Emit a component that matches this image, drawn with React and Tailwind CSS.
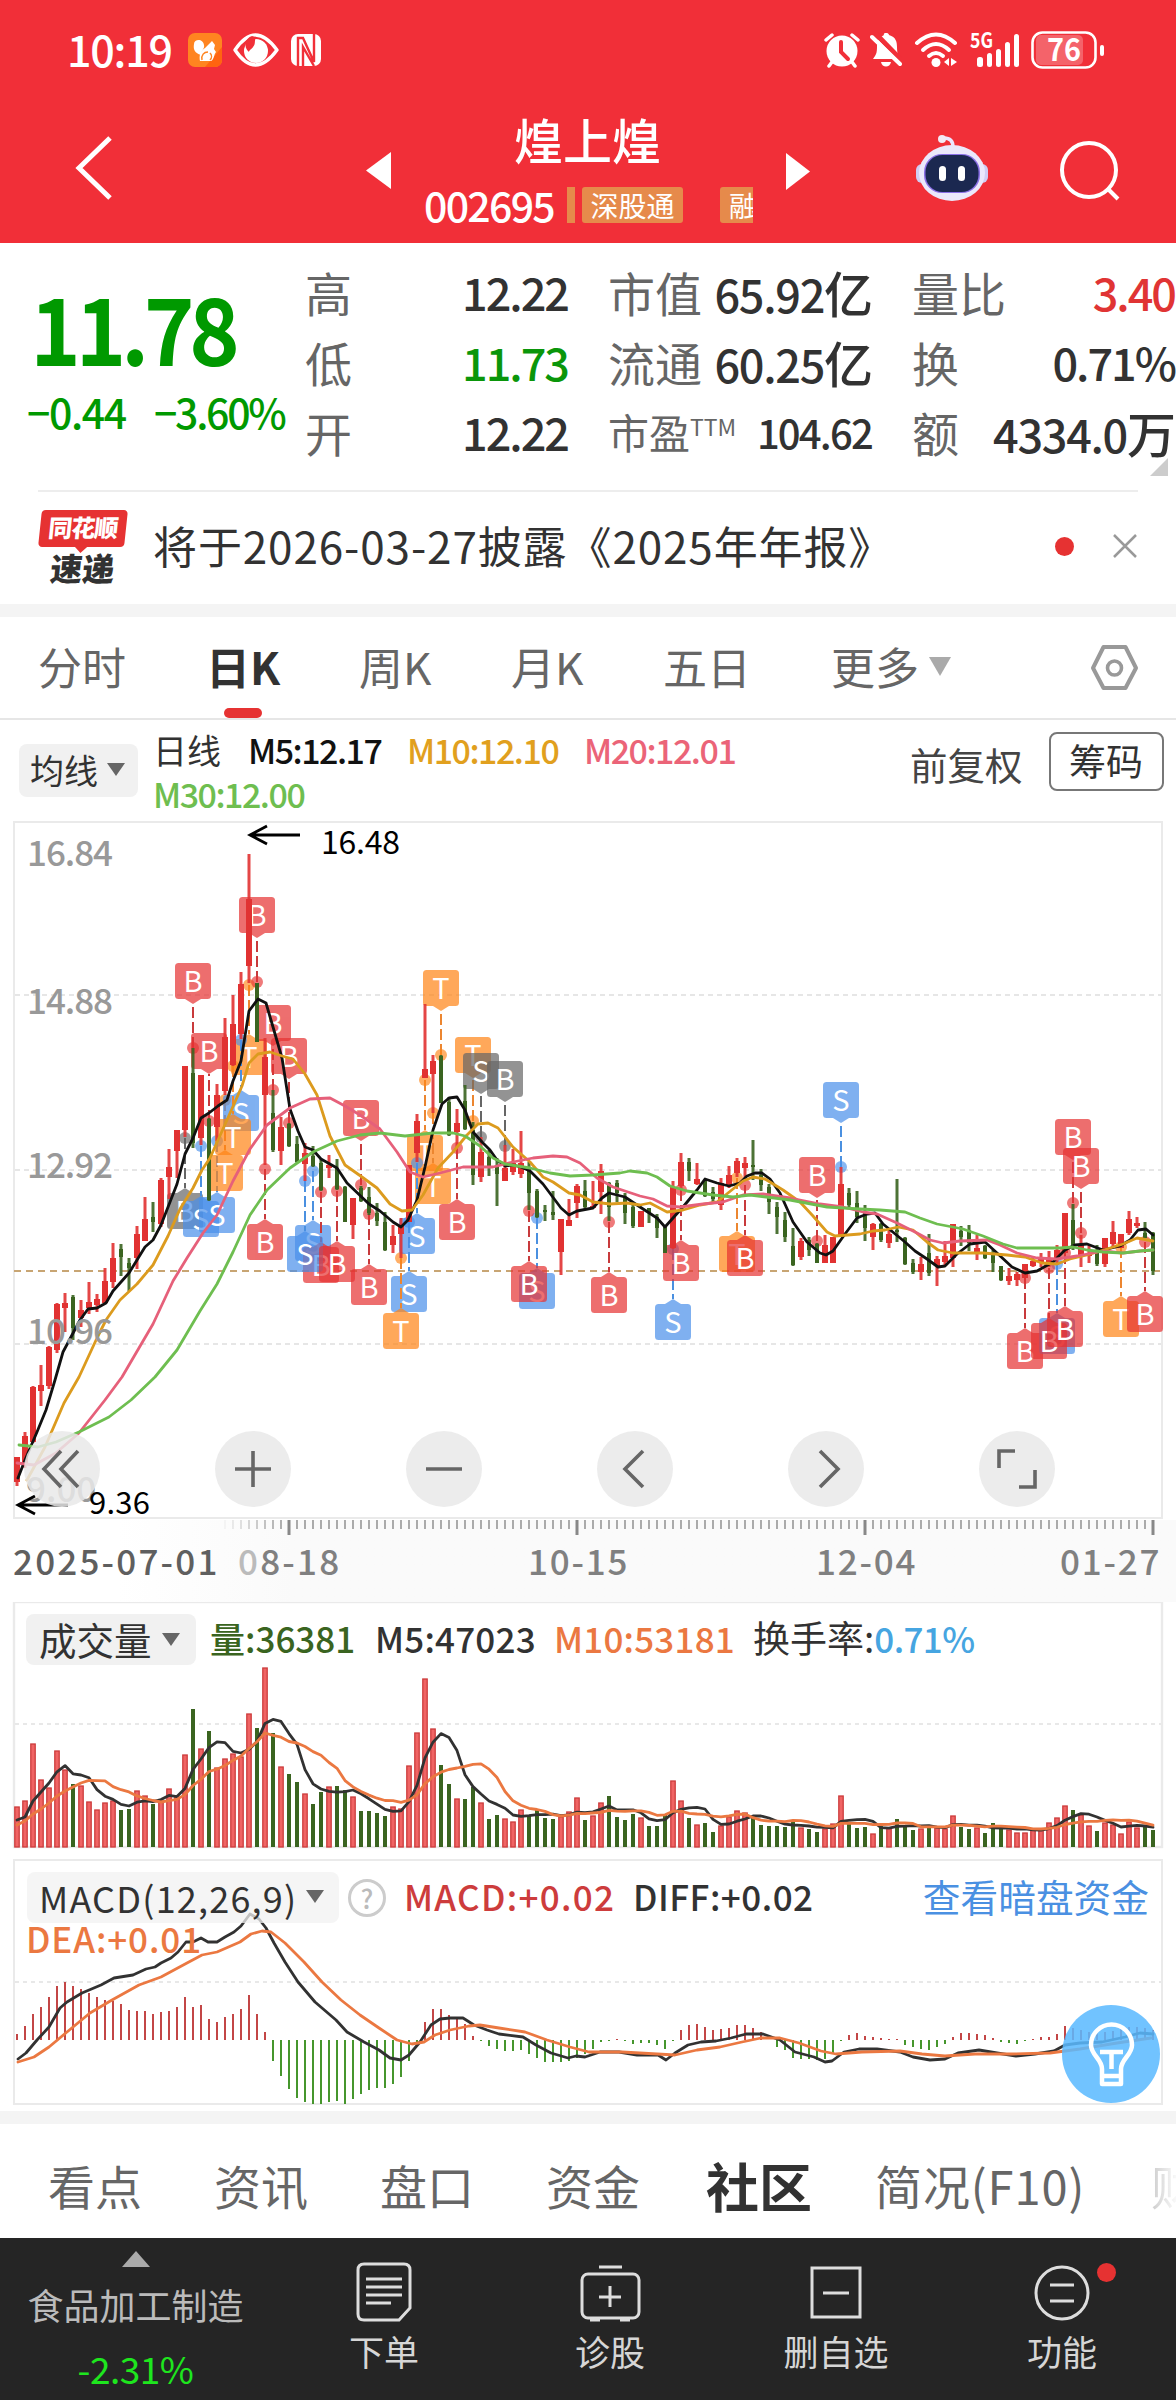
import React from 'react';

// [high, bodyTop, bodyBottom, low, down?] in chart pixels, one entry per trading day
const CANDLES = [
  [637, 637, 662, 666], [612, 616, 645, 648], [566, 567, 622, 623], [545, 565, 571, 586], [526, 527, 566, 569],
  [483, 484, 530, 533], [473, 483, 488, 512], [475, 477, 508, 520, 1], [480, 490, 498, 507], [462, 482, 488, 494],
  [474, 479, 485, 492], [448, 461, 483, 484], [423, 438, 462, 468], [424, 429, 437, 456, 1], [438, 443, 448, 471, 1],
  [406, 414, 438, 449], [377, 399, 421, 421], [382, 397, 402, 412, 1], [358, 360, 404, 407], [329, 347, 357, 379],
  [310, 310, 331, 358], [246, 246, 310, 317], [228, 253, 323, 328, 1], [255, 255, 318, 325], [298, 299, 380, 381, 1],
  [264, 275, 307, 321], [198, 217, 271, 275], [175, 204, 245, 246], [152, 164, 214, 219], [34, 79, 146, 163],
  [163, 163, 222, 222, 1], [218, 237, 275, 345], [270, 293, 330, 332, 1], [297, 307, 331, 345], [303, 304, 326, 327, 1],
  [316, 324, 342, 343, 1], [323, 333, 344, 361], [326, 336, 346, 347, 1], [339, 343, 370, 371, 1], [335, 345, 348, 358],
  [339, 348, 369, 370, 1], [366, 367, 402, 402, 1], [378, 378, 405, 419], [366, 368, 381, 382, 1], [367, 377, 393, 395, 1],
  [383, 393, 401, 406, 1], [392, 402, 430, 431, 1], [405, 416, 425, 433], [398, 406, 414, 438], [345, 345, 402, 402],
  [294, 301, 333, 342], [184, 249, 258, 258], [235, 241, 254, 293], [235, 236, 283, 283, 1], [277, 282, 315, 316, 1],
  [289, 303, 312, 327], [265, 281, 309, 310, 1], [302, 310, 355, 365, 1], [317, 332, 357, 362], [330, 337, 347, 356, 1],
  [338, 345, 354, 386, 1], [325, 348, 361, 361], [329, 343, 352, 355], [311, 343, 354, 358], [342, 347, 373, 390, 1],
  [369, 371, 397, 398, 1], [385, 390, 392, 401, 1], [371, 392, 395, 400, 1], [399, 399, 432, 455], [379, 400, 406, 406],
  [364, 366, 383, 398], [360, 371, 387, 389, 1], [361, 386, 388, 388], [344, 351, 372, 394], [362, 363, 387, 401, 1],
  [360, 363, 373, 382, 1], [373, 377, 393, 404, 1], [382, 387, 406, 408, 1], [391, 391, 407, 407], [388, 388, 393, 403, 1],
  [394, 397, 408, 418, 1], [407, 407, 433, 433, 1], [361, 367, 428, 429], [333, 342, 366, 369], [338, 342, 351, 361, 1],
  [343, 359, 364, 365], [360, 361, 376, 377, 1], [367, 372, 379, 382, 1], [358, 363, 385, 390], [346, 355, 365, 368],
  [338, 341, 353, 357], [337, 343, 348, 361], [320, 345, 347, 360, 1], [349, 355, 365, 371, 1], [364, 367, 382, 394, 1],
  [382, 387, 397, 414, 1], [392, 400, 417, 422, 1], [408, 426, 445, 446, 1], [418, 421, 437, 440], [417, 420, 430, 436, 1],
  [423, 424, 443, 443, 1], [415, 425, 443, 443], [417, 417, 443, 443], [347, 364, 416, 417], [368, 373, 385, 387, 1],
  [371, 383, 397, 403, 1], [385, 392, 408, 421, 1], [403, 404, 417, 430], [403, 404, 420, 422, 1], [408, 414, 423, 428],
  [359, 410, 412, 422, 1], [417, 418, 444, 445, 1], [439, 443, 452, 454, 1], [437, 444, 452, 460], [414, 433, 453, 456, 1],
  [436, 439, 446, 466], [421, 436, 442, 445], [404, 404, 438, 447], [406, 411, 417, 426, 1], [405, 410, 423, 431, 1],
  [415, 428, 434, 440], [425, 426, 438, 439, 1], [430, 435, 443, 452, 1], [446, 446, 460, 461, 1], [448, 456, 461, 465],
  [452, 454, 460, 466], [444, 444, 458, 458], [436, 441, 446, 447], [433, 438, 443, 447], [431, 438, 445, 447],
  [425, 430, 438, 445], [393, 393, 433, 433], [384, 400, 427, 430, 1], [415, 425, 437, 447], [425, 433, 436, 443],
  [425, 430, 444, 446, 1], [418, 418, 444, 447], [401, 412, 424, 427], [414, 414, 428, 428], [391, 399, 413, 415],
  [397, 403, 406, 408], [402, 413, 418, 418, 1], [412, 413, 451, 455, 1],
];

const MA5 = '18,658 25,640 37,612 46,590 55,560 63,532 80,500 88,489 97,488 106,483 113,471 129,453 145,427 153,420 161,405 170,382 177,364 185,334 193,318 201,298 209,293 218,286 227,280 233,261 241,241 249,191 258,179 266,183 273,207 282,238 290,289 298,311 305,327 313,330 321,339 337,348 347,363 369,384 380,391 393,402 401,407 408,400 417,380 425,347 433,310 442,284 449,278 457,277 465,290 473,312 482,322 490,330 497,340 505,346 513,345 521,347 530,351 543,364 561,388 569,395 577,391 593,388 602,378 609,373 625,377 640,387 657,398 665,407 673,398 683,387 697,370 705,359 717,363 729,366 740,363 747,356 755,353 762,353 770,359 780,373 793,402 807,422 820,433 826,435 833,431 845,414 857,398 867,394 875,393 883,404 905,422 915,431 927,439 938,447 945,446 957,434 970,424 985,422 997,433 1012,447 1025,453 1037,451 1053,442 1065,430 1075,425 1087,424 1103,430 1120,426 1130,420 1138,410 1146,409 1153,415';
const MA10 = '27,660 45,627 64,583 79,557 97,518 106,500 120,480 137,464 153,445 168,416 180,389 193,368 202,350 210,338 227,300 242,266 249,243 258,234 270,232 282,236 293,239 305,254 317,275 330,316 345,345 362,357 377,368 390,384 402,391 412,390 423,375 438,348 453,332 467,315 478,304 488,303 498,308 513,327 530,342 543,357 553,362 569,373 580,375 593,382 610,384 627,383 640,385 650,383 667,392 683,390 700,385 717,382 728,373 743,361 753,357 765,359 783,370 800,382 813,396 827,412 835,416 860,414 873,411 885,410 898,407 913,410 927,422 938,430 953,433 983,433 1007,435 1025,437 1042,443 1057,444 1070,439 1087,435 1107,429 1123,424 1137,418 1153,421';
const MA20 = '17,643 34,645 56,633 79,613 105,580 122,557 153,504 173,461 187,438 203,413 217,395 233,361 250,329 267,305 290,288 310,279 330,278 345,286 360,295 380,309 397,332 410,352 423,357 440,353 463,347 493,347 513,342 533,338 553,336 567,337 580,343 597,358 613,367 640,376 653,379 667,386 680,387 703,384 723,382 743,375 763,374 790,378 820,384 843,387 863,392 877,394 897,403 917,413 930,420 943,423 960,421 987,420 1000,425 1017,433 1037,438 1057,439 1077,436 1103,431 1123,433 1140,431 1153,430';
const MA30 = '19,625 38,627 56,622 79,612 109,597 131,580 155,557 177,530 200,491 217,464 233,432 250,395 267,370 290,348 313,332 337,321 360,315 380,313 405,316 433,313 453,313 465,316 480,326 493,338 505,344 530,348 550,353 570,356 593,355 620,353 630,351 647,353 657,357 670,366 687,371 713,375 733,377 750,375 790,380 827,387 860,389 880,390 905,392 920,398 937,404 963,409 983,416 1003,424 1017,428 1037,428 1060,428 1073,427 1087,430 1103,432 1123,433 1140,431 1153,430';

const DIFF = '18,209 26,203 37,190 49,177 60,158 67,152 82,143 101,135 114,128 133,125 146,119 155,117 161,113 171,108 178,102 186,92 193,92 201,88 208,92 217,92 225,87 234,82 241,76 250,64 259,69 266,78 274,93 285,112 298,132 315,152 336,170 347,182 364,192 379,200 390,208 401,210 409,205 420,192 431,175 440,169 450,168 463,168 474,175 487,180 499,184 523,187 536,195 551,203 568,208 576,206 585,207 600,202 619,202 637,205 658,205 666,210 675,203 688,195 701,192 716,191 731,188 746,184 763,184 780,190 795,202 814,207 825,212 832,211 844,202 859,199 877,199 900,202 913,207 930,210 945,209 958,203 979,200 997,203 1016,206 1035,204 1054,201 1065,195 1080,193 1102,192 1125,187 1140,183 1153,184';
const DEA = '18,212 34,207 49,197 67,182 90,163 112,150 139,135 161,127 187,113 202,105 217,102 240,92 251,84 262,81 271,82 285,93 304,112 322,132 341,150 360,165 379,178 397,190 412,194 424,192 435,185 450,180 469,176 480,175 499,178 525,182 547,190 570,197 589,202 622,202 675,205 697,200 720,197 742,192 761,188 780,188 799,193 821,201 836,204 862,202 900,201 922,204 945,206 975,204 1012,204 1050,203 1080,199 1117,193 1151,188';

const VOLUMES = [41, 47, 104, 68, 60, 97, 78, 63, 62, 46, 38, 45, 47, 37, 38, 57, 52, 43, 47, 59, 51, 93, 138, 99, 116, 80, 89, 94, 91, 134, 119, 180, 114, 81, 73, 65, 54, 43, 55, 61, 61, 57, 51, 36, 36, 34, 31, 41, 39, 82, 115, 169, 119, 82, 63, 49, 48, 60, 45, 28, 32, 29, 26, 38, 32, 37, 29, 28, 31, 36, 50, 27, 32, 45, 51, 30, 27, 33, 30, 21, 21, 32, 67, 47, 29, 23, 24, 15, 22, 31, 37, 35, 30, 22, 21, 21, 20, 26, 20, 18, 15, 19, 24, 52, 23, 19, 20, 14, 21, 20, 28, 21, 17, 19, 22, 20, 19, 32, 20, 18, 20, 14, 24, 19, 18, 15, 15, 19, 18, 25, 30, 42, 37, 33, 22, 16, 25, 23, 14, 26, 20, 22, 17];

const MACD = [6, 14, 26, 33, 43, 54, 58, 54, 51, 47, 43, 40, 39, 36, 30, 29, 29, 26, 28, 29, 33, 43, 33, 35, 21, 18, 23, 26, 31, 45, 26, 8, -21, -36, -49, -58, -62, -64, -64, -62, -61, -64, -59, -54, -50, -48, -48, -44, -37, -21, -6, 18, 31, 31, 25, 21, 16, 4, -1, -6, -9, -11, -11, -10, -14, -18, -22, -22, -22, -21, -18, -14, -9, -2, -1, 1, -1, -4, -3, -3, -5, -9, -1, 10, 15, 16, 13, 10, 11, 12, 15, 15, 12, 8, 0, -7, -10, -18, -19, -19, -20, -19, -14, -1, 5, 7, 4, 3, 2, 1, 1, -5, -7, -9, -10, -7, -4, 3, 7, 7, 6, 5, 2, -2, -3, -4, -1, 1, 3, 3, 6, 14, 12, 10, 8, 7, 8, 9, 11, 13, 13, 12, 10];

// [letter, tone, day index, box top, dot y]
const SIGNALS = [
  ['B', 'gray', 21, 373, 318], ['B', 'red', 22, 143, 228], ['S', 'blue', 23, 381, 326], ['B', 'red', 24, 213, 301],
  ['S', 'blue', 25, 377, 321], ['T', 'orange', 26, 335, 280], ['T', 'orange', 29, 219, 165], ['S', 'blue', 28, 275, 220],
  ['T', 'orange', 27, 299, 246], ['B', 'red', 30, 77, 162], ['B', 'red', 31, 404, 349], ['B', 'red', 32, 185, 270],
  ['B', 'red', 34, 218, 303], ['S', 'blue', 37, 405, 351], ['B', 'red', 38, 427, 372], ['S', 'blue', 36, 416, 361],
  ['B', 'red', 40, 426, 371], ['B', 'red', 43, 280, 365], ['B', 'red', 44, 449, 394], ['S', 'blue', 49, 456, 402],
  ['T', 'orange', 48, 493, 438], ['T', 'orange', 51, 315, 260], ['T', 'orange', 52, 348, 293], ['S', 'blue', 50, 398, 343],
  ['T', 'orange', 53, 150, 235], ['B', 'red', 55, 384, 328], ['T', 'orange', 57, 217, 301], ['S', 'gray', 58, 233, 317],
  ['B', 'gray', 61, 241, 326], ['S', 'blue', 65, 453, 398], ['B', 'red', 64, 446, 391], ['B', 'red', 74, 457, 402],
  ['S', 'blue', 82, 484, 429], ['B', 'red', 83, 425, 370], ['T', 'orange', 90, 416, 358], ['B', 'red', 91, 420, 365],
  ['B', 'red', 100, 337, 421], ['S', 'blue', 103, 262, 347], ['B', 'red', 126, 513, 458], ['S', 'blue', 130, 498, 444],
  ['B', 'red', 129, 503, 448], ['B', 'red', 131, 491, 433], ['B', 'red', 132, 299, 383], ['B', 'red', 133, 328, 413],
  ['T', 'orange', 138, 481, 427], ['B', 'red', 141, 476, 422],
];

const TONES = {
  red: ['#e63232', '#c83a3c'],
  blue: ['#4a90eb', '#4a90e0'],
  orange: ['#ff8415', '#ec8630'],
  gray: ['#666666', '#666666'],
};

const dayX = (i) => 17 + i * 8;

// moving average as a list of points, the first days use the values in seed
function averagePoints(days, seed, base) {
  return VOLUMES.map((_, i) => {
    const value = i < seed.length
      ? seed[i]
      : VOLUMES.slice(i - days + 1, i + 1).reduce((a, b) => a + b, 0) / days;
    return `${dayX(i)},${(base - value).toFixed(1)}`;
  }).join(' ');
}

function Line({ points, color, width = 2.8 }) {
  return <polyline points={points} fill="none" stroke={color} strokeWidth={width} strokeLinejoin="round" strokeLinecap="round" />;
}

function Signal({ letter, tone, x, top, dot }) {
  const [fill, stem] = TONES[tone];
  const above = top < dot;
  const edge = above ? top + 36 : top;
  const tip = above ? edge + 5 : edge - 5;
  return (
    <g>
      <line x1={x} x2={x} y1={dot} y2={tip} stroke={stem} strokeWidth="2" strokeDasharray="11 4" />
      <circle cx={x} cy={dot} r="6" fill={fill} opacity="0.65" />
      <g fill={fill} opacity="0.7">
        <rect x={x - 18} y={top} width="36" height="36" rx="3.5" />
        <path d={`M${x - 8} ${edge}L${x} ${tip}L${x + 8} ${edge}z`} />
      </g>
      <text x={x} y={top + 28.5} textAnchor="middle" fontSize="29" fill="#fff">{letter}</text>
    </g>
  );
}

function StatusBar() {
  return (
    <div className="flex h-[100px] items-center justify-between pl-[67px] pr-[71px] text-white">
      <div className="flex items-center">
        <span className="relative -top-[2px] w-[107px] whitespace-nowrap text-[43px] font-medium tracking-[-1.200px]">10:19</span>
        <svg width="34" height="34" viewBox="0 0 34 34" className="ml-[14px]">
          <rect width="34" height="34" rx="7" fill="#ff8420" />
          <path d="M17 34h10a7 7 0 0 0 7-7V14z" fill="#ff6410" />
          <path d="M6 11c0-5 9-6 10 1 1 4-3 5-3 10-6-2-8-5-7-11z" fill="#fff" />
          <path d="M17 15l7-7 3 4-1 4 2 3c-2 2-2 8-5 9H12c-1-5 0-10 5-13z" fill="#fff" />
          <path d="M14 27c-1-5 2-8 6-8M22 27c2-2 2-5 0-7" fill="none" stroke="#ff8420" strokeWidth="1.500" />
        </svg>
        <svg width="46" height="34" viewBox="0 0 46 34" className="ml-[11px]">
          <path d="M2 17Q22 -13 44 17Q22 47 2 17z" fill="none" stroke="#fff" strokeWidth="3.4" strokeLinejoin="round" />
          <circle cx="23" cy="18" r="12" fill="#fff" />
          <path d="M23 4c-2 4 0 7-3 10-1 2-4 3-4 5-6-5-4-14 3-16z" fill="#f12f38" />
        </svg>
        <svg width="32" height="34" viewBox="0 0 32 34" className="ml-[11px]">
          <rect x="1" y="1" width="30" height="32" rx="7" fill="#fff" />
          <path d="M8 33V5l5 0 11 24V1M13 33V14l11 19" fill="none" stroke="#f12f38" strokeWidth="2.4" />
        </svg>
      </div>
      <div className="flex items-center">
        <svg width="36" height="36" viewBox="0 0 36 36">
          <circle cx="18" cy="19" r="15.500" fill="#fff" />
          <path d="M17 10v10l7 7" fill="none" stroke="#f12f38" strokeWidth="4" strokeLinecap="round" />
          <path d="M2 8l6-5M34 8l-6-5M8 30l-3 4M28 30l3 4" stroke="#fff" strokeWidth="3.5" strokeLinecap="round" />
        </svg>
        <svg width="32" height="36" viewBox="0 0 32 36" className="ml-[10px]">
          <path d="M16 1c3 0 3 2 3 2 7 2 8 7 8 12 0 6 1 9 3 12H3c3-4 4-6 4-12 0-5 1-9 7-12 0 0-1-2 2-2zM11 30h10c-1 6-9 6-10 0z" fill="#fff" />
          <path d="M5 1l28 29" stroke="#f12f38" strokeWidth="5" />
          <path d="M2 5l28 27" stroke="#fff" strokeWidth="4" strokeLinecap="round" />
        </svg>
        <svg width="44" height="36" viewBox="0 0 44 36" className="ml-[12px]">
          <g fill="none" stroke="#fff" strokeWidth="4" strokeLinecap="round">
            <path d="M3 11Q22 -6 41 11" />
            <path d="M9 18Q22 6 35 18" />
            <path d="M15 24Q22 18 29 24" />
          </g>
          <circle cx="22" cy="30.500" r="4.500" fill="#fff" />
          <path d="M35 26v8l-5-4zM37 26v8l6-4z" fill="#fff" />
        </svg>
        <svg width="52" height="36" viewBox="0 0 52 36" className="ml-[11px]">
          <text x="1" y="16" fontSize="21" fontWeight="700" fill="#fff" textLength="23" lengthAdjust="spacingAndGlyphs">5G</text>
          <g fill="#fff">
            <rect x="8" y="25" width="6" height="10" rx="2.500" />
            <rect x="18" y="21" width="5" height="14" rx="2.500" />
            <rect x="27" y="17" width="5" height="18" rx="2.500" />
            <rect x="36" y="10" width="5" height="25" rx="2.500" />
            <rect x="45" y="2" width="5" height="33" rx="2.500" />
          </g>
        </svg>
        <svg width="74" height="38" viewBox="0 0 74 38" className="ml-[10px]">
          <rect x="5" y="4" width="47" height="30" rx="5" fill="#fff" opacity="0.25" />
          <rect x="1.5" y="1.5" width="63" height="35" rx="10" fill="none" stroke="#fff" strokeWidth="2.6" />
          <rect x="69" y="14" width="4" height="11" rx="2" fill="#fff" />
          <text x="33" y="30" textAnchor="middle" fontSize="32" fontWeight="700" fill="#fff" textLength="34" lengthAdjust="spacingAndGlyphs">76</text>
        </svg>
      </div>
    </div>
  );
}

function TitleBar() {
  return (
    <div className="flex h-[143px] items-start text-white">
      <svg width="40" height="66" viewBox="0 0 40 66" className="ml-[74px] mt-[35px]">
        <path d="M36 3L5 33L36 63" fill="none" stroke="#fff" strokeWidth="5" />
      </svg>
      <svg width="25" height="38" viewBox="0 0 25 38" className="ml-[252px] mt-[52px]">
        <path d="M25 0v37L0 18.500z" fill="#fff" />
      </svg>
      <div className="ml-[34px] w-[328px]">
        <h1 className="mt-[3px] pr-[3px] text-center text-[49px] font-medium leading-[72px]">煌上煌</h1>
        <div className="mt-[10px] flex h-[40px] items-center">
          <span className="-ml-[1px] w-[143px] pb-[2px] text-[41px] font-medium leading-[38px] tracking-[-1.700px]">002695</span>
          <span className="h-[36px] w-[8px] bg-[#e68a4b]" />
          <span className="ml-[7px] flex h-[36px] w-[101px] items-center justify-center rounded-[3px] bg-[#e68a4b] text-[28px]">深股通</span>
          <span className="ml-[37px] flex h-[36px] w-[33px] items-center overflow-hidden rounded-l-[3px] bg-[#e68a4b] pl-[9px] text-[28px]">融</span>
        </div>
      </div>
      <svg width="25" height="38" viewBox="0 0 25 38" className="ml-[33px] mt-[53px]">
        <path d="M0 0v37L24 18.500z" fill="#fff" />
      </svg>
      <svg width="74" height="70" viewBox="0 0 74 70" className="ml-[104px] mt-[34px]">
        <path d="M38 13q0-9-9-9" fill="none" stroke="#ece6ff" strokeWidth="3.500" strokeLinecap="round" />
        <circle cx="27" cy="5" r="4" fill="#f3e9f4" />
        <rect x="1" y="30" width="12" height="19" rx="6" fill="#d0cdf4" />
        <rect x="61" y="30" width="12" height="19" rx="6" fill="#d0cdf4" />
        <ellipse cx="37" cy="39" rx="33" ry="28" fill="#ebe8fb" />
        <rect x="9" y="20" width="56" height="39" rx="18" fill="#8a6fe6" />
        <rect x="10.500" y="21" width="53" height="37" rx="17" fill="#1b2850" />
        <rect x="24" y="32" width="7" height="15" rx="3.500" fill="#fff" />
        <rect x="43" y="32" width="7" height="15" rx="3.500" fill="#fff" />
      </svg>
      <svg width="64" height="64" viewBox="0 0 64 64" className="ml-[69px] mt-[40px]">
        <circle cx="31" cy="30" r="27" fill="none" stroke="#fff" strokeWidth="4" />
        <path d="M49 48L60 59" stroke="#fff" strokeWidth="4" />
      </svg>
    </div>
  );
}

function Stat({ label, sup, value, unit, tone = 'text-[#323232]', small }) {
  return (
    <div className="flex h-[70px] items-center justify-between whitespace-nowrap">
      <span className={small ? 'text-[41px] text-[#666]' : 'text-[47px] text-[#666]'}>
        {label}
        {sup && <sup className="relative -top-[13px] text-[23px]">{sup}</sup>}
      </span>
      <span className={`${small ? 'text-[40px] tracking-[-1.800px]' : unit ? 'text-[45px] tracking-[-1.300px]' : 'text-[45px] tracking-[-2px]'} font-medium ${tone}`}>
        {value}
        {unit && <span className="text-[49px] tracking-[-1px]">{unit}</span>}
      </span>
    </div>
  );
}

function Quote() {
  return (
    <section className="flex h-[247px] pt-[14px]">
      <div className="w-[305px] text-[#009900]">
        <div className="h-[112px] origin-left scale-x-[.92] pl-[33px] pt-[5px] text-[93px] font-bold leading-[128px] tracking-[-5.500px]">11.78</div>
        <div className="flex pl-[27px] pt-[8px] text-[41px] font-medium leading-[68px] tracking-[-2.300px]">
          <span className="w-[127px] tracking-[-1.400px]">−0.44</span>
          <span>−3.60%</span>
        </div>
      </div>
      <div className="w-[263px]">
        <Stat label="高" value="12.22" />
        <Stat label="低" value="11.73" tone="text-[#0a960a]" />
        <Stat label="开" value="12.22" />
      </div>
      <div className="ml-[40px] w-[264px]">
        <Stat label="市值" value="65.92" unit="亿" />
        <Stat label="流通" value="60.25" unit="亿" />
        <Stat label="市盈" sup="TTM" value="104.62" small />
      </div>
      <div className="ml-[40px] w-[263px]">
        <Stat label="量比" value="3.40" tone="text-[#e03434]" />
        <Stat label="换" value="0.71%" />
        <Stat label="额" value="4334.0" unit="万" />
        <svg width="18" height="18" viewBox="0 0 18 18" className="ml-[238px] mt-[-9px]">
          <path d="M18 0v18H0z" fill="#ccc" />
        </svg>
      </div>
    </section>
  );
}

function News() {
  return (
    <section className="relative flex h-[114px] items-center px-[38px]">
      <i className="absolute left-[38px] right-[38px] top-0 h-[2px] bg-[#ededed]" />
      <div className="w-[90px]">
        <div className="relative mx-auto flex h-[37px] w-[86px] -skew-x-6 items-center justify-center rounded-[4px] bg-[#e63232] pb-[3px] text-[24px] font-black leading-none tracking-[-1px] text-white">
          同花顺
          <i className="absolute -bottom-[4px] left-[38px] h-[10px] w-[10px] rotate-45 bg-[#e63232]" />
        </div>
        <div className="-skew-x-6 pt-[3px] text-center text-[32px] font-black leading-[34px] text-[#323232]">速递</div>
      </div>
      <p className="ml-[25px] flex-1 whitespace-nowrap pb-[4px] text-[44px] tracking-[0.900px] text-[#323232]">将于2026-03-27披露《2025年年报》</p>
      <i className="mb-[2px] h-[19px] w-[19px] rounded-full bg-[#e63232]" />
      <svg width="26" height="26" viewBox="0 0 26 26" className="mb-[2px] ml-[38px]">
        <path d="M2 2L24 24M24 2L2 24" stroke="#999" strokeWidth="2.500" />
      </svg>
    </section>
  );
}

function PeriodTabs() {
  return (
    <nav className="flex h-[103px] items-center border-b-2 border-[#e6e6e6] pb-[3px] pl-[38px] text-[44px] text-[#666]">
      <span className="w-[168px]">分时</span>
      <span className="relative w-[153px] font-bold text-[#323232]">
        日K
        <i className="absolute -bottom-[19px] left-[18px] h-[10px] w-[38px] rounded-[5px] bg-[#e63232]" />
      </span>
      <span className="w-[152px]">周K</span>
      <span className="w-[152px]">月K</span>
      <span className="w-[168px]">五日</span>
      <span>更多</span>
      <svg width="23" height="19" viewBox="0 0 23 19" className="ml-[10px]">
        <path d="M0 0h22L11 19z" fill="#aaa" />
      </svg>
      <svg width="50" height="48" viewBox="0 0 50 48" className="ml-[138px] mt-[3px]">
        <path d="M13.500 3h22L46 24L35.500 44h-22L3 24z" fill="none" stroke="#999" strokeWidth="4" strokeLinejoin="round" />
        <circle cx="24.500" cy="24" r="7" fill="none" stroke="#999" strokeWidth="3.600" />
      </svg>
    </nav>
  );
}

function Caret() {
  return (
    <svg width="18" height="13" viewBox="0 0 18 13">
      <path d="M0 0h18L9 13z" fill="#666" />
    </svg>
  );
}

function AverageBar() {
  return (
    <div className="flex h-[100px] whitespace-nowrap">
      <div className="ml-[19px] mt-[24px] flex h-[53px] w-[119px] items-center gap-[9px] rounded-[8px] bg-[#f1f1f1] pb-[2px] pl-[11px] text-[34px] text-[#323232]">
        均线
        <Caret />
      </div>
      <div className="ml-[15px] w-[757px] pt-[8px] text-[34px] font-medium leading-[44px] tracking-[-1.500px]">
        <div className="flex">
          <span className="w-[95px] font-normal tracking-normal text-[#323232]">日线</span>
          <span className="w-[159px] text-[#111]">M5:12.17</span>
          <span className="w-[177px] text-[#e1a01e]">M10:12.10</span>
          <span className="text-[#eb6478]">M20:12.01</span>
        </div>
        <div className="text-[#6ebe50]">M30:12.00</div>
      </div>
      <span className="pt-[17px] text-[37.500px] leading-[54px] text-[#444]">前复权</span>
      <div className="ml-[26px] mt-[12px] flex h-[59px] w-[115px] items-center justify-center rounded-[8px] border-2 border-[#777] pb-[2px] text-[37px] text-[#323232]">筹码</div>
    </div>
  );
}

const PRICE_LABELS = [['16.84', 46], ['14.88', 194], ['12.92', 358], ['10.96', 524]];

function RoundButton({ children }) {
  return (
    <button className="flex h-[76px] w-[76px] items-center justify-center rounded-full bg-[#e9e9e9]/85">
      <svg width="44" height="44" viewBox="0 0 44 44" fill="none" stroke="#666" strokeWidth="3.600">{children}</svg>
    </button>
  );
}

function KLineChart() {
  return (
    <div className="relative h-[700px]">
      <svg width="1176" height="700" viewBox="0 0 1176 700" className="block">
        <rect x="14" y="2" width="1148" height="696" fill="none" stroke="#eaeaea" strokeWidth="2" />
        {[175, 350, 524].map((y) => (
          <line key={y} x1="15" x2="1161" y1={y} y2={y} stroke="#dedede" strokeWidth="1.500" strokeDasharray="5 4" />
        ))}
        <line x1="14" x2="1160" y1="451" y2="451" stroke="#c8a573" strokeWidth="2" strokeDasharray="7 5" />
        {SIGNALS.map(([letter, tone, day, top, dot]) => (
          <Signal key={day} letter={letter} tone={tone} x={dayX(day)} top={top} dot={dot} />
        ))}
        {CANDLES.map(([high, top, bottom, low, down], i) => (
          <g key={i} fill={down ? '#3a6420' : '#e13232'}>
            <rect x={dayX(i) - 1.5} y={high} width="3" height={low - high} opacity="0.9" />
            <rect x={dayX(i) - (down ? 2 : 3)} y={top} width={down ? 4 : 6} height={Math.max(bottom - top, 2)} />
          </g>
        ))}
        <Line points={MA5} color="#111" />
        <Line points={MA10} color="#dc9b1e" />
        <Line points={MA20} color="#e6607a" />
        <Line points={MA30} color="#6ebe50" />
        <g fill="#999" fontSize="35" fontWeight="500">
          {PRICE_LABELS.map(([label, y]) => (
            <text key={label} x="27" y={y} textLength="86">{label}</text>
          ))}
          <text x="26" y="682">9.00</text>
        </g>
        <g fill="none" stroke="#000" strokeWidth="2.800">
          <path d="M300 15H250M267 6L250 15L267 24" />
          <path d="M68 685H18M35 676L18 685L35 694" />
        </g>
        <text x="321" y="34" fontSize="32" textLength="79">16.48</text>
        <text x="89" y="694" fontSize="31" textLength="61">9.36</text>
      </svg>
      <div className="absolute left-[24px] top-[611px] flex gap-[115px]">
        <RoundButton><path d="M21 4L4 22L21 40M38 4L21 22L38 40" /></RoundButton>
        <RoundButton><path d="M22 4V40M4 22H40" /></RoundButton>
        <RoundButton><path d="M4 22H40" /></RoundButton>
        <RoundButton><path d="M30 4L12 22L30 40" /></RoundButton>
        <RoundButton><path d="M16 4L34 22L16 40" /></RoundButton>
        <RoundButton><path d="M4 21V4H20M40 23V40H24" /></RoundButton>
      </div>
    </div>
  );
}

function DateAxis() {
  const ticks = Array.from({ length: 117 }, (_, i) => 225 + i * 8);
  return (
    <div className="h-[82px] bg-gradient-to-r from-white from-10% to-[#fafafa] to-25%">
      <svg width="1176" height="18" viewBox="0 0 1176 18" className="block">
        {ticks.map((x, i) => (
          <line key={x} x1={x} x2={x} y1="-1" y2={(x - 289) % 288 === 0 ? 15 : 9} stroke="#888" strokeWidth={(x - 289) % 288 === 0 ? 3 : 1.4} opacity={Math.min(1, 0.1 + i * 0.12)} />
        ))}
      </svg>
      <div className="flex whitespace-nowrap text-[35px] font-medium leading-[44px] tracking-[1.800px] text-[#808080]">
        <span className="ml-[13px] w-[225px] tracking-[2.200px] text-[#5f5f5f]">2025-07-01</span>
        <span className="w-[290px] tracking-[2.200px]"><span className="text-[#bbb]">0</span>8-18</span>
        <span className="w-[288px]">10-15</span>
        <span className="w-[244px]">12-04</span>
        <span>01-27</span>
      </div>
    </div>
  );
}

function VolumePanel() {
  return (
    <div className="relative h-[256px]">
      <svg width="1176" height="256" viewBox="0 0 1176 256" className="block">
        <rect x="14" y="0" width="1148" height="245" fill="none" stroke="#eaeaea" strokeWidth="2.400" />
        <line x1="15" x2="1161" y1="122" y2="122" stroke="#e8e8e8" strokeWidth="2" strokeDasharray="4 4" />
        {VOLUMES.map((h, i) => (
          CANDLES[i][4]
            ? <rect key={i} x={dayX(i) - 2} y={245 - h} width="4" height={h} fill="#3a6420" />
            : <rect key={i} x={dayX(i) - 2.2} y={246 - h} width="4.400" height={h - 1} fill="#f06464" stroke="#cd3c3c" strokeWidth="1.300" />
        ))}
        <Line points={averagePoints(5, [27, 30, 46, 55], 245)} color="#323232" />
        <Line points={averagePoints(10, [22, 26, 33, 38, 44, 51, 56, 60, 64], 245)} color="#eb7841" />
      </svg>
      <div className="absolute left-[26px] top-[12px] flex h-[51px] items-center whitespace-nowrap text-[35px] font-medium">
        <div className="flex h-[51px] w-[170px] items-center gap-[10px] rounded-[8px] bg-[#f1f1f1] pb-[1px] pl-[13px] text-[37.500px] font-normal text-[#323232]">
          成交量
          <Caret />
        </div>
        <span className="ml-[14px] w-[165px] pb-[3px] text-[#3a6420]">量:36381</span>
        <span className="w-[179px] pb-[3px] tracking-[0.200px] text-[#323232]">M5:47023</span>
        <span className="w-[199px] pb-[3px] tracking-[0.200px] text-[#eb7841]">M10:53181</span>
        <span className="pb-[3px] text-[37px] font-normal text-[#323232]">换手率:</span>
        <span className="pb-[3px] tracking-[-0.600px] text-[#46a5e1]">0.71%</span>
      </div>
    </div>
  );
}

function MacdPanel() {
  return (
    <div className="relative h-[253px]">
      <svg width="1176" height="253" viewBox="0 8 1176 253" className="block">
        <rect x="14" y="10" width="1148" height="244" fill="none" stroke="#eaeaea" strokeWidth="2" />
        <line x1="15" x2="1161" y1="132" y2="132" stroke="#e8e8e8" strokeWidth="2" strokeDasharray="4 4" />
        {MACD.map((v, i) => (
          <rect key={i} x={dayX(i) - 1} y={v > 0 ? 190 - v : 190} width="2" height={Math.abs(v)} fill={v > 0 ? '#c34646' : '#46962d'} />
        ))}
        <Line points={DIFF} color="#323232" />
        <Line points={DEA} color="#eb7841" />
      </svg>
      <div className="absolute left-[27px] top-[14px] w-[1122px] whitespace-nowrap text-[35px] font-medium">
        <div className="flex h-[51px] items-center">
          <div className="flex h-[51px] w-[312px] items-center justify-between rounded-[8px] bg-[#f1f1f1]/75 pb-[2px] pl-[12px] pr-[15px] text-[36px] font-normal tracking-[1.200px] text-[#323232]">
            MACD(12,26,9)
            <Caret />
          </div>
          <span className="ml-[9px] flex h-[38px] w-[38px] items-center justify-center rounded-full border-[3px] border-[#ccc] text-[26px] leading-none text-[#bbb]">?</span>
          <span className="ml-[18px] w-[229px] pb-[3px] tracking-[1.300px] text-[#cd3c3c]">MACD:+0.02</span>
          <span className="flex-1 pb-[3px] tracking-[0.500px] text-[#323232]">DIFF:+0.02</span>
          <span className="pb-[3px] text-[37.700px] font-normal text-[#4a90e2]">查看暗盘资金</span>
        </div>
        <div className="-ml-[1px] leading-[30px] tracking-[0.900px] text-[#eb7841]">DEA:+0.01</div>
      </div>
      <svg width="98" height="98" viewBox="0 0 98 98" className="absolute left-[1062px] top-[147px]">
        <circle cx="49" cy="49" r="49" fill="#5ab9ff" opacity="0.86" />
        <g fill="none" stroke="#fff" strokeWidth="4.500" strokeLinejoin="round">
          <path d="M40 64c0-10-11-14-11-24a20.500 20.500 0 0 1 41 0c0 10-11 14-11 24v15H40zM40 71h19M38 47h23M49.500 47v17" />
        </g>
      </svg>
    </div>
  );
}

function SectionTabs() {
  return (
    <nav className="flex h-[114px] items-center overflow-hidden whitespace-nowrap bg-white pt-[9px] pl-[48px] text-[47px] text-[#666]">
      <span className="w-[166px] shrink-0">看点</span>
      <span className="w-[166px] shrink-0">资讯</span>
      <span className="w-[166px] shrink-0">盘口</span>
      <span className="w-[160px] shrink-0">资金</span>
      <span className="w-[169px] shrink-0 text-[53px] font-bold text-[#323232]">社区</span>
      <span className="w-[276px] shrink-0 tracking-[0.900px]">简况(F10)</span>
      <span className="shrink-0 bg-gradient-to-r from-[#ccc] to-white to-30% bg-clip-text text-transparent">财务</span>
    </nav>
  );
}

function BottomItem({ label, dot, children }) {
  return (
    <div className="relative flex w-[226px] flex-col items-center">
      <svg width="64" height="64" viewBox="0 0 64 64" fill="none" stroke="#ddd" strokeWidth="3" className="mt-[22px]">{children}</svg>
      <span className="text-[35px] leading-[53px]">{label}</span>
      {dot && <i className="absolute left-[148px] top-[25px] h-[19px] w-[19px] rounded-full bg-[#e63232]" />}
    </div>
  );
}

function BottomBar() {
  return (
    <footer className="flex h-[162px] bg-[#252525] text-[#d6d6d6]">
      <div className="flex w-[271px] flex-col items-center">
        <svg width="28" height="16" viewBox="0 0 28 16" className="mt-[13px]">
          <path d="M14 0L28 16H0z" fill="#aaa" />
        </svg>
        <span className="mt-[9px] text-[36px] leading-[56px] text-[#bbb]">食品加工制造</span>
        <span className="mt-[6px] text-[37px] leading-[60px] tracking-[-0.500px] text-[#1ee61e]">-2.31%</span>
      </div>
      <BottomItem label="下单">
        <path d="M12 4h40q6 0 6 6v38l-11 12H12q-6 0-6-6V10q0-6 6-6zM14 19h36M14 27h36M14 35h36M14 43h25" />
      </BottomItem>
      <BottomItem label="诊股">
        <rect x="4" y="14" width="57" height="44" rx="6" />
        <path d="M21 7h23M32 26v21M21 37h22M12 60h10M42 60h10" />
      </BottomItem>
      <BottomItem label="删自选">
        <path d="M8 8h48v49H8zM19 33h26" />
      </BottomItem>
      <BottomItem label="功能" dot>
        <circle cx="32" cy="33" r="26" />
        <path d="M20 25h24M20 41h24" />
      </BottomItem>
    </footer>
  );
}

export default function App() {
  return (
    <div className="w-[1176px] overflow-hidden bg-white font-['Noto_Sans_CJK_SC',sans-serif]">
      <header className="bg-[#f12f38]">
        <StatusBar />
        <TitleBar />
      </header>
      <Quote />
      <News />
      <div className="h-[13px] bg-[#f4f4f4]" />
      <PeriodTabs />
      <AverageBar />
      <KLineChart />
      <DateAxis />
      <VolumePanel />
      <MacdPanel />
      <div className="h-[13px] bg-[#f4f4f4]" />
      <SectionTabs />
      <BottomBar />
    </div>
  );
}
